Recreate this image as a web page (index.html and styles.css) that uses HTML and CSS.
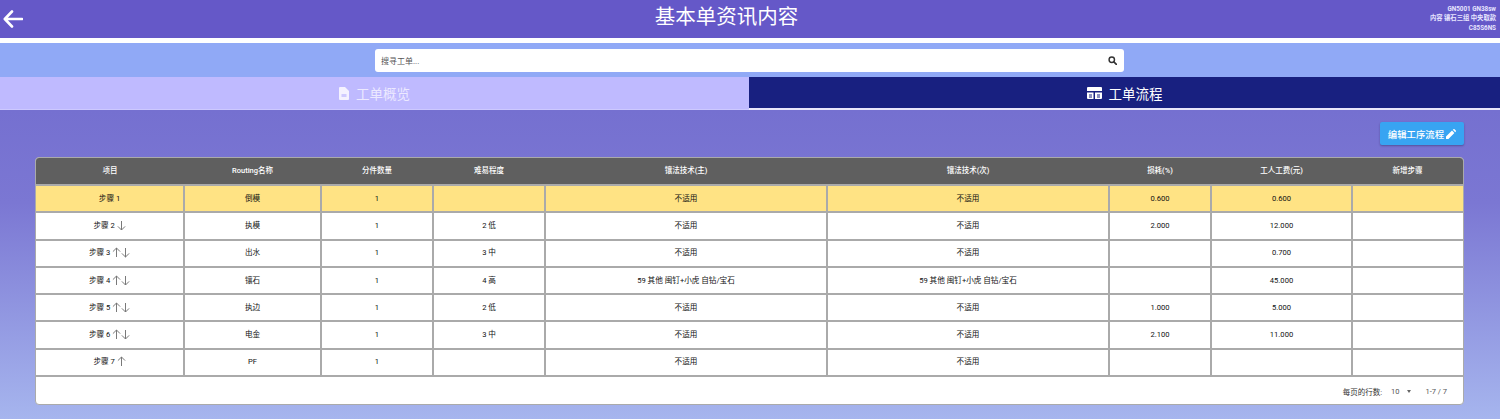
FILE: index.html
```html
<!DOCTYPE html>
<html lang="zh">
<head>
<meta charset="utf-8">
<title>基本单资讯内容</title>
<link rel="stylesheet" href="styles.css">
</head>
<body>
<header class="topbar">
  <svg class="back" viewBox="0 0 20 18" width="20" height="18"><path d="M9 1.5 1.8 9 9 16.5M2.5 9H19" fill="none" stroke="#fff" stroke-width="2.6" stroke-linecap="round" stroke-linejoin="round"/></svg>
  <h1 class="title">基本单资讯内容</h1>
  <div class="meta"><div>GN5001 GN38sw</div><div>内容 镶石三组 中央取款</div><div>C85S6NS</div></div>
</header>
<div class="searchband">
  <div class="search">
    <span class="placeholder">搜寻工单...</span>
    <svg viewBox="0 0 10 10" width="9" height="9"><circle cx="4.2" cy="4.2" r="3" fill="none" stroke="#333" stroke-width="1.6"/><path d="M6.5 6.5 9.3 9.3" stroke="#333" stroke-width="1.8" stroke-linecap="round"/></svg>
  </div>
</div>
<nav class="tabs">
  <div class="tab tab-off">
    <svg viewBox="0 0 10 13" width="10" height="13"><path d="M1 0h5l4 4v8a1 1 0 0 1-1 1H1a1 1 0 0 1-1-1V1a1 1 0 0 1 1-1Z" fill="#f4f2ff"/><path d="M2.500 7h5v3h-5z" fill="#cfcbff"/></svg>
    <span>工单概览</span>
  </div>
  <div class="tab tab-on">
    <svg viewBox="0 0 15 12" width="15" height="12"><path d="M1 0h13a1 1 0 0 1 1 1v3H0V1a1 1 0 0 1 1-1ZM0 5.500h6.500V12H1a1 1 0 0 1-1-1ZM8 5.500h7V11a1 1 0 0 1-1 1H8Z" fill="#fff"/><path d="M2 8h3M2 10h3M10 8h3M10 10h3" stroke="#182080" stroke-width="1"/></svg>
    <span>工单流程</span>
  </div>
</nav>
<main class="content">
  <div class="actions">
    <button class="edit">编辑工序流程
      <svg viewBox="0 0 10 10" width="10" height="10"><path d="M0 10V7.600L6 1.600 8.400 4 2.400 10ZM6.800.8 7.500.2a.7.7 0 0 1 1 0L9.800 1.500a.7.7 0 0 1 0 1L9.200 3.200Z" fill="#fff"/></svg>
    </button>
  </div>
  <section class="card">
    <table class="grid">
      <colgroup><col class="c1"><col class="c2"><col class="c3"><col class="c4"><col class="c5"><col class="c6"><col class="c7"><col class="c8"><col class="c9"></colgroup>
      <thead>
        <tr><th>项目</th><th>Routing名称</th><th>分件数量</th><th>难易程度</th><th>镶法技术(主)</th><th>镶法技术(次)</th><th>损耗(%)</th><th>工人工费(元)</th><th>新增步骤</th></tr>
      </thead>
      <tbody>
        <tr class="current"><td>步骤 1</td><td>倒模</td><td>1</td><td></td><td>不适用</td><td>不适用</td><td>0.600</td><td>0.600</td><td></td></tr>
        <tr><td>步骤 2 <svg class="arr" viewBox="0 0 10 12"><use href="#dn"/></svg></td><td>执模</td><td>1</td><td>2 低</td><td>不适用</td><td>不适用</td><td>2.000</td><td>12.000</td><td></td></tr>
        <tr><td>步骤 3 <svg class="arr" viewBox="0 0 10 12"><use href="#up"/></svg><svg class="arr" viewBox="0 0 10 12"><use href="#dn"/></svg></td><td>出水</td><td>1</td><td>3 中</td><td>不适用</td><td>不适用</td><td></td><td>0.700</td><td></td></tr>
        <tr><td>步骤 4 <svg class="arr" viewBox="0 0 10 12"><use href="#up"/></svg><svg class="arr" viewBox="0 0 10 12"><use href="#dn"/></svg></td><td>镶石</td><td>1</td><td>4 高</td><td>59 其他 闽钉+小虎 自钻/宝石</td><td>59 其他 闽钉+小虎 自钻/宝石</td><td></td><td>45.000</td><td></td></tr>
        <tr><td>步骤 5 <svg class="arr" viewBox="0 0 10 12"><use href="#up"/></svg><svg class="arr" viewBox="0 0 10 12"><use href="#dn"/></svg></td><td>执边</td><td>1</td><td>2 低</td><td>不适用</td><td>不适用</td><td>1.000</td><td>5.000</td><td></td></tr>
        <tr><td>步骤 6 <svg class="arr" viewBox="0 0 10 12"><use href="#up"/></svg><svg class="arr" viewBox="0 0 10 12"><use href="#dn"/></svg></td><td>电金</td><td>1</td><td>3 中</td><td>不适用</td><td>不适用</td><td>2.100</td><td>11.000</td><td></td></tr>
        <tr><td>步骤 7 <svg class="arr" viewBox="0 0 10 12"><use href="#up"/></svg></td><td>PF</td><td>1</td><td></td><td>不适用</td><td>不适用</td><td></td><td></td><td></td></tr>
      </tbody>
    </table>
    <footer class="pager">
      <span class="pager-label">每页的行数:</span>
      <span class="pager-size">10</span>
      <span class="pager-caret"></span>
      <span class="pager-range">1-7 / 7</span>
    </footer>
  </section>
</main>
<svg class="defs" width="0" height="0">
  <defs>
    <g id="dn"><path d="M5 1v10M1 7l4 4 4-4" fill="none" stroke="#777" stroke-width="1.100"/></g>
    <g id="up"><path d="M5 11V1M1 5l4-4 4 4" fill="none" stroke="#777" stroke-width="1.100"/></g>
  </defs>
</svg>
</body>
</html>
```
FILE: styles.css
```css
* { box-sizing: border-box; }
html, body { margin: 0; padding: 0; height: 100%; overflow: hidden; }
body {
  font-family: "Roboto", "Noto Sans CJK SC", "Liberation Sans", sans-serif;
  background: #fff;
}
.defs { position: absolute; }

.topbar {
  height: 38px;
  display: flex;
  align-items: center;
  padding: 0 4px 0 3px;
  background: #6558c8;
  color: #fff;
}
.back { flex: none; }
.title {
  flex: 1;
  margin: 0;
  padding: 0 0 3px 2px;
  text-align: center;
  font-size: 20.500px;
  font-weight: 400;
  line-height: 33px;
}
.meta {
  flex: none;
  width: 68px;
  text-align: right;
  font-size: 6.300px;
  line-height: 9.500px;
  white-space: nowrap;
  color: #e8e6ff;
  font-weight: 700;
}

.searchband {
  margin-top: 5px;
  height: 34px;
  padding-top: 6px;
  background: #90a9f6;
  display: flex;
  justify-content: center;
}
.search {
  width: 749px;
  height: 23px;
  margin-left: -1px;
  padding: 0 7px 0 6px;
  background: #fff;
  border-radius: 3px;
  display: flex;
  align-items: center;
  justify-content: space-between;
}
.placeholder { font-size: 8px; color: #555; }

.tabs { display: flex; height: 33px; }
.tab {
  display: flex;
  align-items: center;
  justify-content: center;
  gap: 7px;
  font-size: 13.500px;
}
.tab svg { flex: none; }
.tab-off {
  flex: 0 0 749px;
  background: #bfbaff;
  color: #ece9ff;
  border-bottom: 1px solid #cdc9ff;
}
.tab-on {
  flex: 1;
  background: #182080;
  color: #fff;
  border-bottom: 2px solid #e8e6fa;
}

.content {
  height: 309px;
  padding: 12px 36px 0 35px;
  background: linear-gradient(180deg, #7570d0 0%, #7b77d3 30%, #a6b5ee 100%);
}
.actions { display: flex; justify-content: flex-end; height: 23px; margin-bottom: 12px; }
.edit {
  width: 84px;
  height: 23px;
  border: 0;
  padding: 0;
  border-radius: 2px;
  background: #38a4f2;
  color: #fff;
  font: 500 9.400px "Roboto", "Noto Sans CJK SC", sans-serif;
  display: flex;
  align-items: center;
  justify-content: center;
  gap: 2px;
  box-shadow: 0 1px 2px rgba(40, 40, 90, .45);
}

.card {
  width: 1429px;
  height: 248px;
  border: 1px solid #aaa;
  border-radius: 4px;
  background: #fff;
  overflow: hidden;
}
.grid {
  width: 1427px;
  table-layout: fixed;
  border-collapse: collapse;
  font-size: 7.600px;
  color: #111;
}
.c1 { width: 148px; }
.c2 { width: 137px; }
.c3 { width: 112px; }
.c4 { width: 112px; }
.c5 { width: 282px; }
.c6 { width: 282px; }
.c7 { width: 102px; }
.c8 { width: 141px; }
.c9 { width: 111px; }

.grid th {
  height: 27px;
  padding: 0 0 3px;
  background: #5f5f5f;
  color: #fff;
  font-weight: 500;
  font-size: 7.500px;
  text-align: center;
  border-bottom: 2px solid #aaa;
}
.grid td {
  height: 27.300px;
  padding: 0;
  text-align: center;
  border: 2px solid #aaa;
  border-top: 0;
  line-height: 12px;
}
.grid td:first-child { border-left: 0; }
.grid td:last-child { border-right: 0; }
.current td { background: #ffe384; }
.arr { width: 9px; height: 11px; vertical-align: -3px; }

.pager {
  height: 28px;
  display: flex;
  align-items: center;
  justify-content: flex-end;
  padding-right: 16px;
  font-size: 7.500px;
  color: #555;
}
.pager-label { color: #333; }
.pager-size { margin-left: 9px; }
.pager-caret {
  margin-left: 8px;
  border: 2.500px solid transparent;
  border-top: 3px solid #666;
  border-bottom: 0;
}
.pager-range { margin-left: 14px; }
```
